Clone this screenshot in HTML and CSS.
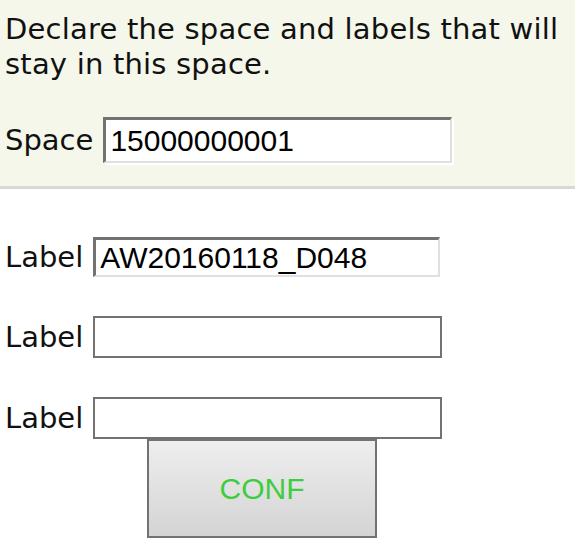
FILE: index.html
```html
<!DOCTYPE html>
<html lang="en">
<head>
    <meta charset="UTF-8">
    <meta name="viewport" content="width=device-width, initial-scale=1.0">
    <title>Declare space</title>
    <link rel="stylesheet" href="styles.css">
</head>
<body>
    <!-- Space declaration -->
    <div class="declare">
        <p class="intro">Declare the space and labels that will stay in this space.</p>
        <div class="field">
            <label for="space">Space</label>
            <input class="text-input inset space-input" id="space" type="text" value="15000000001">
        </div>
    </div>

    <!-- Labels -->
    <form class="labels">
        <div class="field">
            <label for="label1">Label</label>
            <input class="text-input inset label-input" id="label1" type="text" value="AW20160118_D048">
        </div>
        <div class="field">
            <label for="label2">Label</label>
            <input class="text-input plain" id="label2" type="text">
        </div>
        <div class="field">
            <label for="label3">Label</label>
            <input class="text-input plain" id="label3" type="text">
        </div>
        <button class="conf-button" type="button">CONF</button>
    </form>
</body>
</html>
```

FILE: styles.css
```css
body {
    margin: 0;
    font-family: "DejaVu Sans", Verdana, sans-serif;
    font-size: 29px;
    color: #111;
    background: white;
}

/* Space panel */
.declare {
    width: 575px;
    box-sizing: border-box;
    padding: 12px 0 23px 5px;
    background: #f4f7e9;
    border-bottom: 3px solid #d8d8d8;
}

.intro {
    margin: 0 0 35px 0;
    line-height: 35px;
    letter-spacing: 0.2px;
}

/* Rows */
.field {
    display: flex;
    align-items: center;
    gap: 10px;
}

.field label {
    line-height: 35px;
}

.text-input {
    box-sizing: border-box;
    margin: 0;
    padding: 0 4px;
    font-family: "Liberation Sans", Arial, sans-serif;
    font-size: 30px;
    color: #000;
    background: white;
    outline: none;
}

.inset {
    border-style: solid;
    border-width: 3px 2px 2px 3px;
    border-color: #727272 #e0e0e0 #e0e0e0 #727272;
}

.space-input {
    width: 349px;
    height: 46px;
    box-shadow: 2px 2px 0 white;
}

.label-input {
    width: 347px;
    height: 40px;
}

.plain {
    width: 349px;
    height: 42px;
    border: 2px solid #727272;
}

/* Labels form */
.labels {
    margin: 0;
    padding: 48px 0 0 5px;
}

.labels .field {
    margin-bottom: 39px;
}

.labels .field:last-of-type {
    margin-bottom: 0;
}

.conf-button {
    display: block;
    margin-left: 142px;
    width: 230px;
    height: 99px;
    padding: 0;
    border: 2px solid #727272;
    background: linear-gradient(#eeeeee, #d4d4d4);
    color: #3dcd3d;
    font-family: "Liberation Sans", Arial, sans-serif;
    font-size: 30px;
    cursor: pointer;
}
```
